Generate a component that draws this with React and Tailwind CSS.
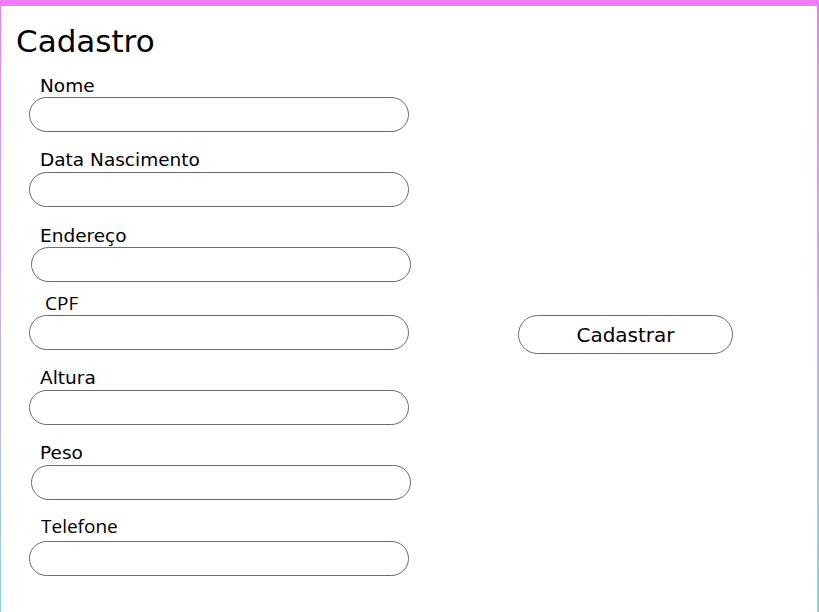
const fields = [
  { label: 'Nome', mt: 'mt-[16px]', ml: 'ml-0', lx: 'pl-[11px]', font: 'fancy', gap: 'mb-0' },
  { label: 'Data Nascimento', mt: 'mt-[17px]', ml: 'ml-0', lx: 'pl-[11px]', font: 'fancy', gap: 'mb-px' },
  { label: 'Endereço', mt: 'mt-[18px]', ml: 'ml-[2px]', lx: 'pl-[9px]', font: 'fancy', gap: 'mb-0' },
  { label: 'CPF', mt: 'mt-[10px]', ml: 'ml-0', lx: 'pl-[16px]', font: 'plain', gap: 'mb-px' },
  { label: 'Altura', mt: 'mt-[17px]', ml: 'ml-0', lx: 'pl-[11px]', font: 'fancy', gap: 'mb-px' },
  { label: 'Peso', mt: 'mt-[17px]', ml: 'ml-[2px]', lx: 'pl-[9px]', font: 'fancy', gap: 'mb-px' },
  { label: 'Telefone', mt: 'mt-[15px]', ml: 'ml-0', lx: 'pl-[12px]', font: 'plain', gap: 'mb-[4px]' },
]

function Field({ label, mt, ml, lx, font, gap }) {
  const family =
    font === 'fancy'
      ? "font-['DejaVu_Sans',sans-serif] text-[18.5px]"
      : "font-['Open_Sans',sans-serif] text-[19px]"
  return (
    <div className={`flex flex-col ${mt} ${ml}`}>
      <label className={`${lx} ${gap} ${family} leading-[22px] text-black`}>{label}</label>
      <input
        type="text"
        className="h-[35px] w-[380px] rounded-full border border-[#6b6b6b] bg-white px-4 outline-none"
      />
    </div>
  )
}

export default function App() {
  return (
    <div className="min-h-[640px] w-full bg-gradient-to-b from-[#f07af9] to-[#7fd9d6] pt-[6px] pl-px pr-[2px]">
      <div className="min-h-[634px] bg-white pt-[17px] pl-[15px]">
        <h1 className="font-['DejaVu_Sans',sans-serif] text-[31px] leading-[36px] text-black">Cadastro</h1>

        <div className="flex items-start">
          <form className="flex flex-col pl-[13px]">
            {fields.map((f) => (
              <Field key={f.label} {...f} />
            ))}
          </form>

          <button
            type="button"
            className="ml-[107px] mt-[256px] h-[39px] w-[215px] rounded-full border border-[#6b6b6b] bg-white font-['DejaVu_Sans',sans-serif] text-[20px] text-black"
          >
            Cadastrar
          </button>
        </div>
      </div>
    </div>
  )
}
